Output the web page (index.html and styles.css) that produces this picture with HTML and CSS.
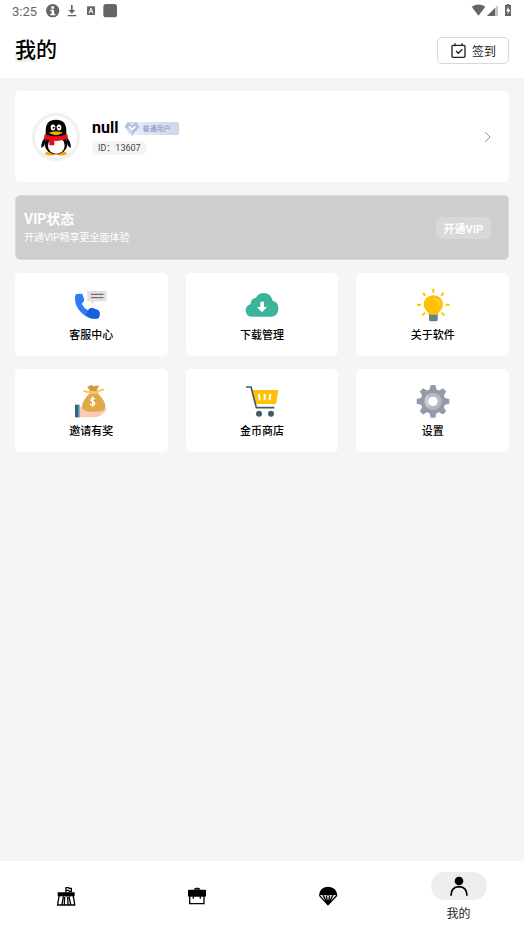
FILE: index.html
```
<!DOCTYPE html>
<html lang="zh-CN">
<head>
    <meta charset="UTF-8">
    <meta name="viewport" content="width=device-width, initial-scale=1.0">
    <title>我的</title>
    <link rel="stylesheet" href="styles.css">
</head>
<body>
    <!-- 状态栏 -->
    <div class="status-bar">
        <span class="time">3:25</span>
        <svg class="status-left" viewBox="138 0 216 66">
            <circle cx="158" cy="32" r="20"/>
            <path d="M154 19h8v7h-8zM151 29h11v12h4v5h-15v-5h4v-7h-4z" fill="#fff"/>
            <path d="M213 15h5v15h8l-10.500 11-10.500-11h8zM203 45h26v4h-26z"/>
            <rect x="261" y="19" width="24" height="26" rx="2"/>
            <path d="M267 40l6-16 6 16M269 35h8" fill="none" stroke="#fff" stroke-width="3"/>
            <rect x="310" y="12" width="41" height="40" rx="8"/>
        </svg>
        <svg class="status-right" viewBox="153 0 123 66">
            <path d="M155 20q21-13 41 0l-20.500 27z"/>
            <path d="M234 15v33h-33z" fill="#c4c4c4"/>
            <path d="M225 24v24h-24z"/>
            <path d="M260 12h8v3h5v33h-18v-33h5z"/>
            <path d="M266 20l-8 13h5v10l8-14h-5z" fill="#fff"/>
        </svg>
    </div>

    <header class="header">
        <h1 class="title"><span class="title-mark">我</span>的</h1>
        <button class="sign-btn" type="button">
            <svg class="sign-icon" viewBox="91 124 45 45" fill="none" stroke="#222" stroke-width="4">
                <rect x="94" y="131" width="39" height="36" rx="3"/>
                <path d="M103 125v9M124 125v9M106 148l7 7 12-12"/>
            </svg>
            签到
        </button>
    </header>

    <main class="main">
        <a class="card profile" href="#profile">
            <span class="avatar">
                <svg viewBox="60 54 96 110">
                    <ellipse cx="92" cy="157" rx="17" ry="6" fill="#f8a800"/>
                    <ellipse cx="124" cy="157" rx="17" ry="6" fill="#f8a800"/>
                    <path d="M78 106q-16 15-14 34 5 0 10-10zM138 106q16 15 14 34-5 0-10-10z" fill="#050505"/>
                    <ellipse cx="108" cy="128" rx="34" ry="31" fill="#050505"/>
                    <ellipse cx="109" cy="133" rx="25" ry="25" fill="#fff"/>
                    <path d="M77 104V89q0-33 31-33t31 33v15z" fill="#050505"/>
                    <ellipse cx="99" cy="79" rx="7" ry="9" fill="#fff"/>
                    <ellipse cx="117" cy="79" rx="7" ry="9" fill="#fff"/>
                    <circle cx="101" cy="80" r="3"/>
                    <path d="M113 81q4-6 7 0" fill="none" stroke="#111" stroke-width="3"/>
                    <path d="M86 95q22-10 43 0-21 14-43 0z" fill="#f8a800"/>
                    <path d="M74 99q34 13 68 0l2 12q-20 10-41 8v13H88v-15q-9-2-16-6z" fill="#e80d1d"/>
                </svg>
            </span>
            <span class="profile-info">
                <span class="name-row">
                    <span class="name">null</span>
                    <span class="level">
                        <svg class="level-gem" viewBox="311 63 47 45">
                            <path d="M322 66h25l10 14-22 27-23-27z" fill="#b3bde2"/>
                            <path d="M322 66h25l-12 12z" fill="#d5dcf2"/>
                            <path d="M312 80l23 10v17z" fill="#cdd5ef"/>
                            <path d="M325 79l10 9 10-9" fill="none" stroke="#fff" stroke-width="5"/>
                        </svg>
                        普通用户
                    </span>
                </span>
                <span class="user-id">ID：13607</span>
            </span>
            <svg class="arrow" viewBox="0 0 8 12" fill="none" stroke="#999">
                <path d="M1 1l5 5-5 5"/>
            </svg>
        </a>

        <section class="vip">
            <div>
                <h2 class="vip-title">VIP状态</h2>
                <p class="vip-text">开通VIP畅享更全面体验</p>
            </div>
            <button class="vip-btn" type="button">开通VIP</button>
        </section>

        <!-- 功能入口 -->
        <div class="grid">
            <a class="card tile" href="#service">
                <svg class="tile-icon" viewBox="44 24 102 102">
                    <path d="M49 43q9-3 20-1l6 17q-2 8-8 12 6 13 19 20 5-7 12-8l19 8q5 4 4 13 0 9-9 12-25 4-48-20Q41 70 49 43z" fill="#2f7bf0"/>
                    <path d="M98 83l19 8q5 4 4 13 0 9-9 12-9 1-20-3-6-3-12-8 3-6 6-14 5-7 12-8z" fill="#1760dc"/>
                    <path d="M87 33h52q3 0 3 3v25q0 3-3 3h-31l-11 11V64H87q-3 0-3-3V36q0-3 3-3z" fill="#e1e1e1"/>
                    <path d="M95 43h37M95 53h37" stroke="#6b4a58" stroke-width="3"/>
                </svg>
                客服中心
            </a>
            <a class="card tile" href="#download">
                <svg class="tile-icon" viewBox="45 24 102 102">
                    <path d="M67 110q-19 0-20-18 0-15 15-20 0-17 16-19 7-14 23-14 22 1 27 23 17 3 17 24 0 21-20 24z" fill="#3cb39d"/>
                    <path d="M91 65h11v16h9L96 97 81 81h10z" fill="#fff"/>
                </svg>
                下载管理
            </a>
            <a class="card tile" href="#about">
                <svg class="tile-icon" viewBox="46 24 102 102">
                    <path d="M98 26v12M67 39l7 8M129 39l-7 8M49 74h12M135 74h12M65 106l8-8M131 106l-8-8" stroke="#ffc107" stroke-width="6"/>
                    <path d="M84 106q0-8-9-16-6-7-6-17 2-25 29-27 27 2 29 27 0 10-6 17-9 8-9 16z" fill="#ffc107"/>
                    <path d="M98 56q17 2 19 19" fill="none" stroke="#ffe07a" stroke-width="3"/>
                    <path d="M85 104h26v16q-1 4-5 4H90q-4 0-5-4z" fill="#607d8b"/>
                    <path d="M85 110h26M85 117h26" stroke="#78909c" stroke-width="2"/>
                </svg>
                关于软件
            </a>
            <a class="card tile" href="#invite">
                <svg class="tile-icon" viewBox="44 24 102 102">
                    <path d="M60 94q15-6 28 3l17 3q6 4-1 8 16 1 32-13 7 0 5 6-13 20-33 23H60z" fill="#fbc9b7"/>
                    <path d="M47 86h13v38H47z" fill="#2f6588"/>
                    <path d="M56 86h4v38h-4z" fill="#5d91af"/>
                    <path d="M91 52h24q24 24 23 40-2 14-21 15H87q-18-2-19-16 0-16 23-39z" fill="#e1a94a"/>
                    <path d="M84 32l13-5 7 4 15-3-8 19H93z" fill="#d79a3e"/>
                    <path d="M72 44q14 7 40 3l6 3M112 47l22-7" fill="none" stroke="#f4c558" stroke-width="5"/>
                    <path d="M107 70q-4-4-9-2-6 3-1 7l7 4q5 5-2 8-6 1-10-3M100 61v31" fill="none" stroke="#fff" stroke-width="4"/>
                </svg>
                邀请有奖
            </a>
            <a class="card tile" href="#shop">
                <svg class="tile-icon" viewBox="45 24 102 102">
                    <path d="M68 42h77l-7 42H76z" fill="#ffc107"/>
                    <path d="M84 54h6l2 19h-6zM101 54h6v19h-6zM118 54h6l-2 19h-6z" fill="#fff"/>
                    <path d="M48 33h15l16 62h54" fill="none" stroke="#465a64" stroke-width="5"/>
                    <circle cx="87" cy="113" r="9" fill="#465a64"/>
                    <circle cx="123" cy="113" r="9" fill="#465a64"/>
                </svg>
                金币商店
            </a>
            <a class="card tile" href="#settings">
                <svg class="tile-icon" viewBox="46 24 102 102">
                    <g fill="#949ba8">
                        <circle cx="97" cy="76" r="37"/>
                        <path id="teeth" d="M90 27h14l4 16H86zM90 125h14l4-16H86zM48 69v14l16 4V65zM146 69v14l-16 4V65z"/>
                        <use href="#teeth" transform="rotate(45 97 76)"/>
                    </g>
                    <circle cx="97" cy="76" r="26" fill="#b4b9c3"/>
                    <path d="M79 94a26 26 0 0 1 0-36l18 18z" fill="#c9cdd4"/>
                    <circle cx="97" cy="76" r="14" fill="#fff"/>
                </svg>
                设置
            </a>
        </div>
    </main>

    <!-- 底部导航 -->
    <nav class="nav">
        <a class="nav-item" href="#home" aria-label="首页">
            <svg class="nav-icon" viewBox="165 93 60 60">
                <path d="M170 112h51v11q-5 4-10 0-5 5-10 0-5 4-10 0-5 4-10 0-6 4-11 0z"/>
                <path d="M195 113V96M196 98h7l2 2h6v9h-6l-2-3h-7M174 124l-4 24M217 124l4 24M187 125l-4 23M191 125l-1 23M200 125l1 23M204 125l5 23M168 150h55" fill="none" stroke="#000" stroke-width="4"/>
            </svg>
        </a>
        <a class="nav-item" href="#tools" aria-label="工具">
            <svg class="nav-icon" viewBox="558 93 60 60">
                <path d="M561 107q0-3 3-3h15q1-6 6-6h7q5 0 6 6h14q3 0 3 3v15q0 3-3 3h-48q-3 0-3-3z"/>
                <path d="M581 103h15" stroke="#777" stroke-width="2"/>
                <path d="M566 124v22h43v-22M577 124v7M598 124v7" fill="none" stroke="#000" stroke-width="4"/>
            </svg>
        </a>
        <a class="nav-item" href="#discover" aria-label="发现">
            <svg class="nav-icon" viewBox="949 93 60 60">
                <path d="M952 122q1-25 27-27 27 2 28 27-8-4-14 0-7-4-14 0-7-4-14 0-6-4-13 0z"/>
                <path d="M953 121l26 28 27-28M965 122l14 27 14-27M974 122l5 27 5-27" fill="none" stroke="#000" stroke-width="4"/>
            </svg>
        </a>
        <a class="nav-item active" href="#mine">
            <span class="nav-pill">
                <svg class="nav-icon" viewBox="1341 61 60 60">
                    <circle cx="1371" cy="76" r="13"/>
                    <path d="M1347 120q0-26 24-27 24 1 24 27" fill="none" stroke="#000" stroke-width="5"/>
                </svg>
            </span>
            我的
        </a>
    </nav>
</body>
</html>
```

FILE: styles.css
```
* {
    box-sizing: border-box;
}

body {
    margin: 0;
    min-height: 100vh;
    display: flex;
    flex-direction: column;
    background: #f5f5f5;
    color: #000;
    font-family: Roboto, "Noto Sans CJK SC", sans-serif;
}

a {
    color: inherit;
    text-decoration: none;
}

button {
    font-family: inherit;
    cursor: pointer;
}

svg {
    display: block;
    flex-shrink: 0;
}

/* 状态栏 */
.status-bar {
    display: flex;
    align-items: center;
    height: 22px;
    padding: 0 12px;
    background: #fff;
    color: #666;
    fill: #666;
    font-size: 13px;
}

.status-left {
    width: 72px;
    height: 22px;
    margin-left: 9px;
}

.status-right {
    width: 41px;
    height: 22px;
    margin-left: auto;
}

.header {
    display: flex;
    align-items: center;
    justify-content: space-between;
    height: 56px;
    padding: 0 15px;
    background: #fff;
}

.title {
    margin: 0;
    font-size: 21px;
    line-height: 28px;
    font-weight: 500;
}

.title-mark {
    background: linear-gradient(transparent 70%, #efefef 70%);
}

.sign-btn {
    display: flex;
    align-items: center;
    gap: 6px;
    height: 27px;
    padding: 0 12px 0 13px;
    background: #fff;
    border: 1px solid #d8d8d8;
    border-radius: 5px;
    color: #222;
    font-size: 12px;
}

.sign-icon {
    width: 15px;
    height: 15px;
}

.main {
    flex: 1;
    display: flex;
    flex-direction: column;
    gap: 13px;
    padding: 13px 15px;
}

.card {
    background: #fff;
    border-radius: 5px;
}

/* 用户信息 */
.profile {
    display: flex;
    align-items: center;
    gap: 12px;
    padding: 22px 17px 21px;
}

.avatar {
    display: flex;
    align-items: center;
    justify-content: center;
    width: 48px;
    height: 48px;
    border: 3px solid #f0f0f0;
    border-radius: 50%;
}

.avatar svg {
    width: 32px;
    height: 37px;
}

.profile-info {
    display: flex;
    flex: 1;
    flex-direction: column;
    align-items: flex-start;
    gap: 4px;
}

.name-row {
    display: flex;
    align-items: center;
    gap: 6px;
}

.name {
    font-size: 16px;
    line-height: 18px;
    font-weight: 700;
}

.level {
    display: flex;
    align-items: center;
    gap: 2px;
    height: 13px;
    padding-right: 9px;
    border-radius: 2px;
    background: linear-gradient(90deg, #fff, #e3e8f5 30%, #ccd4eb);
    color: #8492c0;
    font-size: 7px;
}

.level-gem {
    width: 16px;
    height: 15px;
}

.user-id {
    padding: 0 6px;
    border-radius: 7px;
    background: #f4f4f4;
    color: #444;
    font-size: 9px;
    line-height: 14px;
}

.arrow {
    width: 8px;
    height: 12px;
}

/* VIP */
.vip {
    display: flex;
    align-items: center;
    justify-content: space-between;
    padding: 13px 17px 12px 8px;
    border: 1px solid #dadada;
    border-radius: 5px;
    background: #cecece;
    color: #fff;
}

.vip-title {
    margin: 0;
    font-size: 14px;
    line-height: 20px;
    font-weight: 700;
}

.vip-text {
    margin: 0;
    font-size: 10px;
    line-height: 18px;
}

.vip-btn {
    height: 22px;
    padding: 0 8px;
    border: 0;
    border-radius: 4px;
    background: #d8d8d8;
    color: #fff;
    font-size: 11px;
    font-weight: 700;
}

.grid {
    display: grid;
    grid-template-columns: repeat(3, 1fr);
    gap: 13px 18px;
}

.tile {
    display: flex;
    flex-direction: column;
    align-items: center;
    gap: 6px;
    padding: 15px 0 12px;
    font-size: 11px;
    line-height: 16px;
    font-weight: 500;
}

.tile-icon {
    width: 34px;
    height: 34px;
}

/* 底部导航 */
.nav {
    display: grid;
    grid-template-columns: repeat(4, 1fr);
    height: 70px;
    background: #fff;
}

.nav-item {
    display: flex;
    flex-direction: column;
    align-items: center;
    justify-content: center;
    gap: 6px;
    color: #222;
    font-size: 12px;
    line-height: 16px;
}

.nav-item.active {
    padding-top: 2px;
}

.nav-icon {
    width: 20px;
    height: 20px;
    fill: #000;
}

.nav-pill {
    display: flex;
    align-items: center;
    justify-content: center;
    width: 56px;
    height: 28px;
    border-radius: 14px;
    background: #eee;
}
```
